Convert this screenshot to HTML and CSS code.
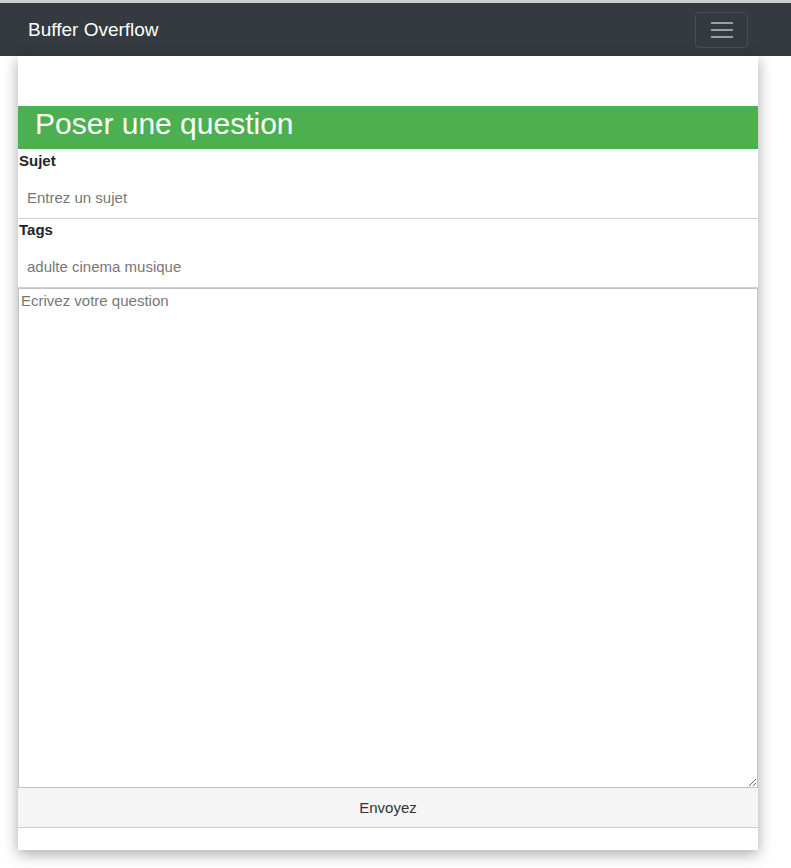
FILE: index.html
```html
<!DOCTYPE html>
<html lang="fr">
<head>
<meta charset="utf-8">
<title>Buffer Overflow</title>
<link rel="stylesheet" href="styles.css">
</head>
<body>
<div class="topline"></div>
<nav class="navbar">
  <span class="brand">Buffer Overflow</span>
  <button class="toggler" type="button" aria-label="Menu">
    <svg width="24" height="18" viewBox="0 0 24 18"><g stroke="#9a9da1" stroke-width="2"><line x1="1" y1="2" x2="23" y2="2"/><line x1="1" y1="9" x2="23" y2="9"/><line x1="1" y1="16" x2="23" y2="16"/></g></svg>
  </button>
</nav>
<main class="page">
  <div class="card">
    <div class="spacer"></div>
    <h3 class="title">Poser une question</h3>
    <form class="form">
      <label class="label" for="sujet">Sujet</label>
      <input class="input" id="sujet" type="text" placeholder="Entrez un sujet">
      <label class="label" for="tags">Tags</label>
      <input class="input" id="tags" type="text" placeholder="adulte cinema musique">
      <textarea class="area" placeholder="Ecrivez votre question"></textarea>
      <button class="submit" type="button">Envoyez</button>
    </form>
    <div class="foot"></div>
  </div>
</main>
</body>
</html>
```
FILE: styles.css
```css
* { box-sizing: border-box; }
html, body { margin: 0; padding: 0; background: #fff; }
body { font-family: "Liberation Sans", Arial, sans-serif; color: #212529; }
.topline { height: 3px; background: #cfcfcf; }
.navbar {
  height: 53px;
  background: #343a40;
  display: flex;
  align-items: center;
  justify-content: space-between;
  padding: 0 43px 0 28px;
}
.brand { color: #fff; font-size: 19px; padding-top: 1px; }
.toggler {
  width: 53px; height: 36px;
  background: transparent;
  border: 1px solid rgba(255,255,255,0.1);
  border-radius: 4px;
  display: flex; align-items: center; justify-content: center;
  padding: 0;
}
.page { padding-left: 18px; padding-bottom: 18px; }
.card {
  width: 740px;
  background: #fff;
  box-shadow: 0 4px 14px rgba(0,0,0,0.35);
}
.spacer { height: 50px; }
.title {
  margin: 0;
  height: 43px;
  background: #4caf50;
  color: #fff;
  font-weight: 400;
  font-size: 30px;
  line-height: 36px;
  padding-left: 17px;
}
.form { display: flex; flex-direction: column; padding-top: 1px; }
.label {
  font-weight: 700;
  font-size: 15px;
  line-height: 21px;
  padding-left: 1px;
  color: #212529;
}
.input {
  height: 48px;
  border: none;
  border-bottom: 1px solid #cfcfcf;
  font-family: "Liberation Sans", Arial, sans-serif;
  font-size: 15px;
  padding: 6px 9px 0;
  outline: none;
  color: #555;
}
.input::placeholder, .area::placeholder { color: #777; }
.area {
  height: 500px;
  border: 1px solid #c3c3c3;
  font-family: "Liberation Sans", Arial, sans-serif;
  font-size: 15px;
  padding: 3px 2px;
  resize: vertical;
  margin: 0;
  display: block;
}
.submit {
  height: 40px;
  background: #f5f5f5;
  border: none;
  border-bottom: 1px solid #cfcfcf;
  font-family: "Liberation Sans", Arial, sans-serif;
  font-size: 15px;
  color: #333;
}
.foot { height: 22px; }
```
